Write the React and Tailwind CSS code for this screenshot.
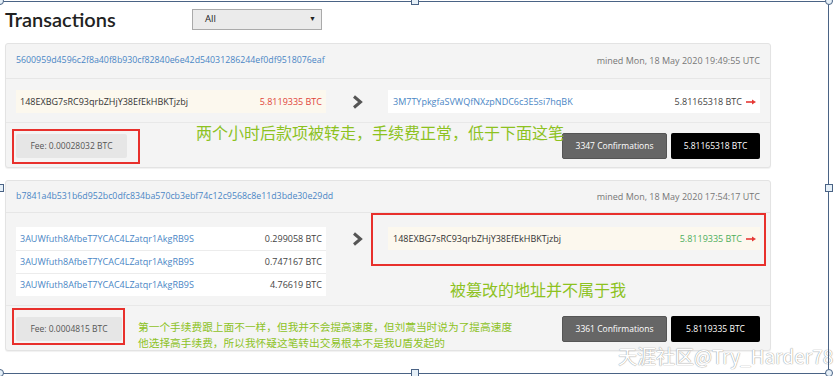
const ui = { fontFamily: '"Open Sans", "Noto Sans", sans-serif' }
const cjk = { fontFamily: '"Noto Sans CJK SC", sans-serif' }

function Chevron() {
  return (
    <svg width="11" height="14" viewBox="0 0 11 14">
      <polyline points="2,1.5 8.5,7 2,12.5" fill="none" stroke="#555" strokeWidth="3" />
    </svg>
  )
}

function RedArrow() {
  return (
    <svg width="10" height="6" viewBox="0 0 10 6" className="ml-[4px]">
      <line x1="0" y1="3" x2="7" y2="3" stroke="#e53935" strokeWidth="1.6" />
      <polygon points="6,0.5 10,3 6,5.5" fill="#e53935" />
    </svg>
  )
}

function Card({ hash, mined, inputs, output, outBg, outColor, outAmount, fee, feeW, confirms, total, bodyPt, headerH }) {
  return (
    <div className="w-[766px] rounded-[3px] border border-[#e3e3e3] bg-[#f4f4f4] shadow-[0_1px_1px_rgba(0,0,0,0.06)]">
      <div className={`flex items-center justify-between border-b border-[#e6e6e6] pl-[10px] pr-[10px] ${headerH}`}>
        <span className="text-[8.8px] text-[#4a86c5]">{hash}</span>
        <span className="text-[9px] text-[#777]">mined {mined}</span>
      </div>
      <div className={`flex items-start pl-[10px] pr-[10px] pb-[9px] ${bodyPt}`}>
        <div className="flex w-[310px] flex-col">
          {inputs.map((r, i) => (
            <div
              key={i}
              className={`flex h-[23px] items-center justify-between px-[4px] text-[9px] ${r.bg} ${i > 0 ? 'border-t border-[#ececec]' : ''}`}
            >
              <span className={r.addrColor}>{r.addr}</span>
              <span className={r.amtColor}>{r.amt}</span>
            </div>
          ))}
        </div>
        <div className="flex h-[23px] w-[62px] items-center justify-center">
          <Chevron />
        </div>
        <div className={`flex h-[23px] w-[372px] items-center justify-between pl-[5px] pr-[4px] text-[9px] ${outBg}`}>
          <span className={output.color}>{output.addr}</span>
          <span className="flex items-center">
            <span className={outColor}>{outAmount}</span>
            <RedArrow />
          </span>
        </div>
      </div>
      <div className="flex items-center justify-between border-t border-[#e8e8e8] pl-[10px] pr-[10px] pt-[10px] pb-[8px]">
        <div className={`flex h-[24px] items-center justify-center rounded-[2px] bg-[#e6e6e6] text-[8.5px] text-[#555] ${feeW}`}>
          Fee: {fee}
        </div>
        <div className="flex gap-[4px]">
          <div className="flex h-[26px] w-[105px] items-center justify-center rounded-[2px] border border-[#555] bg-[#666] text-[8.5px] text-white">
            {confirms} Confirmations
          </div>
          <div className="flex h-[26px] w-[89px] items-center justify-center rounded-[2px] bg-black text-[8.5px] text-white">
            {total}
          </div>
        </div>
      </div>
    </div>
  )
}

export default function App() {
  return (
    <div className="relative h-[376px] w-[834px] overflow-hidden bg-white" style={ui}>
      <div className="pl-[5px] pt-[8px]">
        <div className="flex h-[22px] items-center">
          <h1
            className="w-[187px] text-[20px] font-semibold leading-none text-[#222]"
            style={{ fontFamily: 'Lato, "Open Sans", sans-serif' }}
          >
            Transactions
          </h1>
          <div className="flex h-[21px] w-[130px] items-center justify-between border border-[#aaa] bg-[#ebebeb] pl-[12px] pr-[5px] text-[9.5px] text-[#222]">
            <span>All</span>
            <span className="text-[7px]">▼</span>
          </div>
        </div>

        <div className="mt-[13px] flex flex-col gap-[12px]">
          <Card
            hash="5600959d4596c2f8a40f8b930cf82840e6e42d54031286244ef0df9518076eaf"
            mined="Mon, 18 May 2020 19:49:55 UTC"
            headerH="h-[35px]"
            bodyPt="pt-[11px]"
            inputs={[
              { addr: '148EXBG7sRC93qrbZHjY38EfEkHBKTjzbj', amt: '5.8119335 BTC', bg: 'bg-[#fcf8ee]', addrColor: 'text-[#333]', amtColor: 'text-[#e0443a]' },
            ]}
            output={{ addr: '3M7TYpkgfaSVWQfNXzpNDC6c3E5si7hqBK', color: 'text-[#4a86c5]' }}
            outBg="bg-white"
            outColor="text-[#444]"
            outAmount="5.81165318 BTC"
            fee="0.00028032 BTC"
            feeW="w-[111px]"
            confirms="3347"
            total="5.81165318 BTC"
          />
          <Card
            hash="b7841a4b531b6d952bc0dfc834ba570cb3ebf74c12c9568c8e11d3bde30e29dd"
            mined="Mon, 18 May 2020 17:54:17 UTC"
            headerH="h-[32px]"
            bodyPt="pt-[14px]"
            inputs={[
              { addr: '3AUWfuth8AfbeT7YCAC4LZatqr1AkgRB9S', amt: '0.299058 BTC', bg: 'bg-white', addrColor: 'text-[#4a86c5]', amtColor: 'text-[#444]' },
              { addr: '3AUWfuth8AfbeT7YCAC4LZatqr1AkgRB9S', amt: '0.747167 BTC', bg: 'bg-white', addrColor: 'text-[#4a86c5]', amtColor: 'text-[#444]' },
              { addr: '3AUWfuth8AfbeT7YCAC4LZatqr1AkgRB9S', amt: '4.76619 BTC', bg: 'bg-white', addrColor: 'text-[#4a86c5]', amtColor: 'text-[#444]' },
            ]}
            output={{ addr: '148EXBG7sRC93qrbZHjY38EfEkHBKTjzbj', color: 'text-[#333]' }}
            outBg="bg-[#fcf8ee]"
            outColor="text-[#4cae5c]"
            outAmount="5.8119335 BTC"
            fee="0.0004815 BTC"
            feeW="w-[106px]"
            confirms="3361"
            total="5.8119335 BTC"
          />
        </div>
      </div>

      {/* annotations */}
      <div className="absolute left-[12px] top-[129px] h-[35px] w-[128px] border-2 border-[#e8302c]" />
      <div className="absolute left-[371px] top-[213px] h-[53px] w-[395px] border-2 border-[#e8302c]" />
      <div className="absolute left-[12px] top-[308px] h-[37px] w-[113px] border-2 border-[#e8302c]" />

      <div className="absolute left-[196px] top-[121px] text-[16px] leading-[22px] text-[#8dc21f]" style={cjk}>
        两个小时后款项被转走，手续费正常，低于下面这笔
      </div>
      <div className="absolute left-[450px] top-[278px] text-[16px] leading-[22px] text-[#8dc21f]" style={cjk}>
        被篡改的地址并不属于我
      </div>
      <div className="absolute left-[138px] top-[319px] text-[10.7px] leading-[16px] text-[#8dc21f]" style={cjk}>
        <div>第一个手续费跟上面不一样，但我并不会提高速度，但刘蒿当时说为了提高速度</div>
        <div>他选择高手续费，所以我怀疑这笔转出交易根本不是我U盾发起的</div>
      </div>

      <div
        className="absolute left-[618px] top-[343px] text-[19px] leading-[26px] text-white [text-shadow:0_0_1px_#9a9a9a,0_0_1px_#9a9a9a]"
        style={cjk}
      >
        天涯社区@Try_Harder78
      </div>

      {/* selection frame */}
      <div className="pointer-events-none absolute left-[-10px] right-[5px] top-[1px] bottom-[2px] border border-[#4a6385]" />
      <div className="absolute left-[-4px] top-[-3px] h-[8px] w-[8px] rounded-full border border-[#4a6385] bg-[#e6f0f8]" />
      <div className="absolute left-[411px] top-[-3px] h-[8px] w-[8px] border border-[#4a6385] bg-[#e6f0f8]" />
      <div className="absolute left-[825px] top-[-3px] h-[8px] w-[8px] rounded-full border border-[#4a6385] bg-[#e6f0f8]" />
      <div className="absolute left-[-4px] top-[184px] h-[8px] w-[8px] border border-[#4a6385] bg-[#e6f0f8]" />
      <div className="absolute left-[825px] top-[184px] h-[8px] w-[8px] border border-[#4a6385] bg-[#e6f0f8]" />
      <div className="absolute left-[-4px] top-[369px] h-[8px] w-[8px] rounded-full border border-[#4a6385] bg-[#e6f0f8]" />
      <div className="absolute left-[411px] top-[369px] h-[8px] w-[8px] border border-[#4a6385] bg-[#e6f0f8]" />
      <div className="absolute left-[825px] top-[369px] h-[8px] w-[8px] rounded-full border border-[#4a6385] bg-[#e6f0f8]" />
    </div>
  )
}
